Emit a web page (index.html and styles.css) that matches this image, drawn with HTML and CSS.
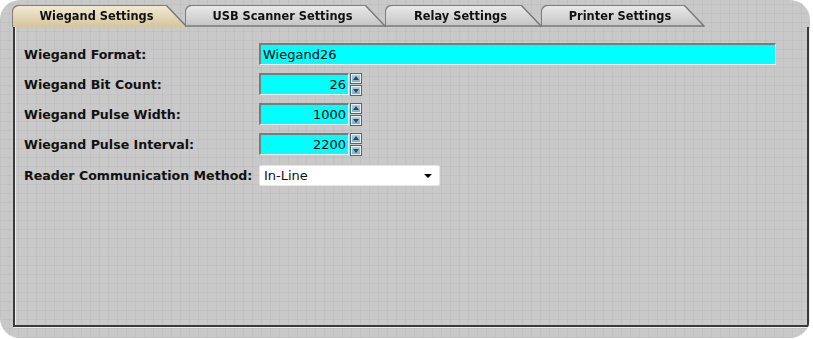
FILE: index.html
```html
<!DOCTYPE html>
<html lang="en">
<head>
  <meta charset="UTF-8">
  <title>Reader Settings</title>
  <link rel="stylesheet" href="styles.css">
</head>
<body>

<div class="panel">
  <div class="tabs">
    <div class="tab tab-wiegand active"><div class="tab-face">Wiegand Settings</div></div>
    <div class="tab tab-usb"><div class="tab-face">USB Scanner Settings</div></div>
    <div class="tab tab-relay"><div class="tab-face">Relay Settings</div></div>
    <div class="tab tab-printer"><div class="tab-face">Printer Settings</div></div>
  </div>

  <div class="frame">
    <div class="row">
      <label class="lbl">Wiegand Format:</label>
      <input class="field wide" type="text" value="Wiegand26">
    </div>
    <div class="row">
      <label class="lbl">Wiegand Bit Count:</label>
      <input class="field num" type="text" value="26">
      <div class="spin"><span class="spin-btn up"></span><span class="spin-btn down"></span></div>
    </div>
    <div class="row">
      <label class="lbl">Wiegand Pulse Width:</label>
      <input class="field num" type="text" value="1000">
      <div class="spin"><span class="spin-btn up"></span><span class="spin-btn down"></span></div>
    </div>
    <div class="row">
      <label class="lbl">Wiegand Pulse Interval:</label>
      <input class="field num" type="text" value="2200">
      <div class="spin"><span class="spin-btn up"></span><span class="spin-btn down"></span></div>
    </div>
    <div class="row row-last">
      <label class="lbl">Reader Communication Method:</label>
      <div class="select">In-Line<span class="caret"></span></div>
    </div>
  </div>
</div>

</body>
</html>
```

FILE: styles.css
```css
body {
  margin: 0;
  background: #fff;
  font-family: "DejaVu Sans", Verdana, sans-serif;
  color: #111;
}
.panel {
  width: 810px;
  height: 338px;
  border-radius: 20px;
  background-color: #c9c9c9;
  background-image:
    repeating-linear-gradient(0deg, rgba(0,0,0,0.035) 0 1px, transparent 1px 9px),
    repeating-linear-gradient(90deg, rgba(0,0,0,0.035) 0 1px, transparent 1px 9px);
  overflow: hidden;
}
.tabs {
  display: flex;
  padding: 6px 0 0 13px;
  height: 21px;
}
.tab {
  filter: drop-shadow(1px 0 0 #6e6e6e) drop-shadow(-1px 0 0 #808080) drop-shadow(0 -1px 0 #808080);
}
.tab-face {
  height: 21px;
  box-sizing: border-box;
  padding-right: 6px;
  border-radius: 6px 0 0 0;
  clip-path: polygon(0 0, calc(100% - 20px) 0, 100% 100%, 0 100%);
  background: linear-gradient(#e9e9e9, #c6c6c6);
  border-bottom: 2px solid #8c8c8c;
  font-size: 11.4px;
  font-weight: bold;
  line-height: 20px;
  text-align: center;
  white-space: nowrap;
}
.active .tab-face {
  background: linear-gradient(#f1e9d4, #d5c59e);
  border-bottom: none;
  line-height: 21px;
}
.tab-wiegand { width: 173px; }
.tab-usb { width: 199px; }
.tab-relay { width: 155px; margin-left: 1px; }
.tab-printer { width: 162px; margin-left: 1px; }

.frame {
  margin-left: 13px;
  width: 796px;
  height: 300px;
  box-sizing: border-box;
  border: 2px solid #3a3a3a;
  border-top: none;
  box-shadow: inset 1px 0 0 #ececec, 1px 1px 0 #ececec;
  padding: 12px 0 0 9px;
}
.row {
  display: flex;
  align-items: center;
  height: 30px;
}
.row-last {
  height: 32px;
}
.lbl {
  width: 235px;
  flex: none;
  font-size: 12.6px;
  font-weight: bold;
  white-space: nowrap;
}
.field {
  height: 22px;
  box-sizing: border-box;
  margin: 0;
  background: #00ffff;
  border-style: solid;
  border-width: 2px 1px 1px 2px;
  border-color: #7c7c7c #fff #fff #7c7c7c;
  font-family: "DejaVu Sans", Verdana, sans-serif;
  font-size: 13px;
  color: #000;
  padding: 0 2px;
  outline: none;
}
.wide {
  width: 517px;
}
.num {
  width: 90px;
  text-align: right;
}
.spin {
  display: flex;
  flex-direction: column;
  gap: 1px;
  margin-left: 1px;
  padding-top: 1px;
}
.spin-btn {
  position: relative;
  width: 12px;
  height: 11px;
  box-sizing: border-box;
  border: 1px solid #2c7596;
  box-shadow: inset 0 0 0 1px #e8f2f6;
  background: linear-gradient(#b5d3e0, #7fadc2);
}
.spin-btn::after {
  content: "";
  position: absolute;
  left: 2px;
  top: 2px;
  border-left: 3px solid transparent;
  border-right: 3px solid transparent;
}
.up::after {
  border-bottom: 4px solid #1f4f66;
}
.down::after {
  top: 3px;
  border-top: 4px solid #1f4f66;
}
.select {
  position: relative;
  width: 181px;
  height: 21px;
  box-sizing: border-box;
  background: #fff;
  border: 1px solid #e6e6e6;
  border-radius: 2px;
  font-size: 13px;
  line-height: 19px;
  padding-left: 4px;
}
.caret {
  position: absolute;
  right: 7px;
  top: 8px;
  border-left: 4px solid transparent;
  border-right: 4px solid transparent;
  border-top: 4px solid #000;
}
```
